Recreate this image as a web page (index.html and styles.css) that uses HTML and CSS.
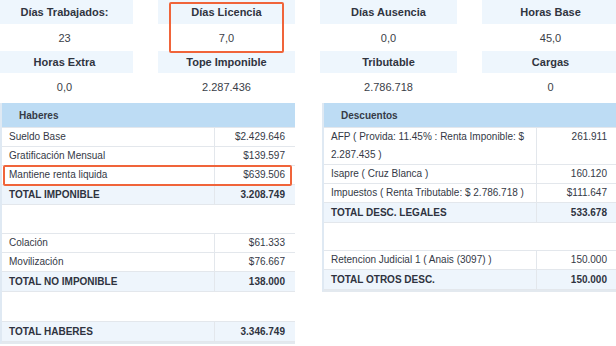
FILE: index.html
```html
<!DOCTYPE html>
<html>
<head>
<meta charset="utf-8">
<link rel="stylesheet" href="styles.css">
</head>
<body>
<div class="page">
  <div class="stats">
    <div class="sh">Días Trabajados:</div>
    <div class="sh">Días Licencia</div>
    <div class="sh">Días Ausencia</div>
    <div class="sh">Horas Base</div>
    <div class="sv">23</div>
    <div class="sv">7,0</div>
    <div class="sv">0,0</div>
    <div class="sv">45,0</div>
    <div class="sh">Horas Extra</div>
    <div class="sh">Tope Imponible</div>
    <div class="sh">Tributable</div>
    <div class="sh">Cargas</div>
    <div class="sv">0,0</div>
    <div class="sv">2.287.436</div>
    <div class="sv">2.786.718</div>
    <div class="sv">0</div>
    <div class="mark mark-licencia"></div>
  </div>

  <div class="panels">
    <div class="panel">
      <table class="tbl">
        <colgroup><col class="cl"><col class="cv"></colgroup>
        <tr class="head"><th colspan="2">Haberes</th></tr>
        <tr><td class="lbl">Sueldo Base</td><td class="val">$2.429.646</td></tr>
        <tr><td class="lbl">Gratificación Mensual</td><td class="val">$139.597</td></tr>
        <tr><td class="lbl">Mantiene renta liquida</td><td class="val">$639.506</td></tr>
        <tr class="total"><td class="lbl">TOTAL IMPONIBLE</td><td class="val">3.208.749</td></tr>
        <tr class="empty e1"><td colspan="2"></td></tr>
        <tr><td class="lbl">Colación</td><td class="val">$61.333</td></tr>
        <tr><td class="lbl">Movilización</td><td class="val">$76.667</td></tr>
        <tr class="total"><td class="lbl">TOTAL NO IMPONIBLE</td><td class="val">138.000</td></tr>
        <tr class="empty e2"><td colspan="2"></td></tr>
        <tr class="total"><td class="lbl">TOTAL HABERES</td><td class="val">3.346.749</td></tr>
      </table>
      <div class="mark mark-renta"></div>
    </div>

    <div class="panel">
      <table class="tbl">
        <colgroup><col class="cl"><col class="cv"></colgroup>
        <tr class="head"><th colspan="2">Descuentos</th></tr>
        <tr><td class="lbl">AFP ( Provida: 11.45% : Renta Imponible: $ 2.287.435 )</td><td class="val top">261.911</td></tr>
        <tr><td class="lbl">Isapre ( Cruz Blanca )</td><td class="val">160.120</td></tr>
        <tr><td class="lbl">Impuestos ( Renta Tributable: $ 2.786.718 )</td><td class="val">$111.647</td></tr>
        <tr class="total"><td class="lbl">TOTAL DESC. LEGALES</td><td class="val">533.678</td></tr>
        <tr class="empty e3"><td colspan="2"></td></tr>
        <tr><td class="lbl">Retencion Judicial 1 ( Anais (3097) )</td><td class="val">150.000</td></tr>
        <tr class="total"><td class="lbl">TOTAL OTROS DESC.</td><td class="val">150.000</td></tr>
      </table>
    </div>
  </div>
</div>
</body>
</html>
```

FILE: styles.css
```css
html, body {
  margin: 0;
  padding: 0;
  background: #ffffff;
  overflow: hidden;
}
body {
  width: 616px;
  height: 346px;
  font-family: "Liberation Sans", Arial, sans-serif;
  color: #343946;
}
.page {
  width: 640px;
}
.stats {
  position: relative;
  margin-left: -4px;
  display: grid;
  grid-template-columns: repeat(4, 137px);
  grid-template-rows: 24px 27px 22px 27px;
  column-gap: 25px;
}
.sh {
  background: #eef6fd;
  font-size: 11px;
  font-weight: bold;
  display: flex;
  align-items: center;
  justify-content: center;
  color: #30343f;
}
.sv {
  font-size: 11px;
  display: flex;
  align-items: center;
  justify-content: center;
  color: #3a3e48;
}
.mark {
  position: absolute;
  border: 2.5px solid #f0643a;
  border-radius: 2px;
  box-sizing: border-box;
  pointer-events: none;
}
.mark-licencia {
  left: 173px;
  top: 2px;
  width: 115px;
  height: 51px;
}
.panels {
  margin-top: 3px;
  display: flex;
  column-gap: 27px;
  align-items: flex-start;
}
.panel {
  position: relative;
  width: 295px;
  flex: none;
  border-left: 2px solid #dfe9f3;
  border-bottom: 2px solid #e3e9ef;
  box-sizing: border-box;
}
.tbl {
  width: 100%;
  border-collapse: collapse;
  font-size: 10px;
  table-layout: fixed;
}
.tbl .cv { width: 81px; }
.tbl td {
  border: 1px solid #e3e7ec;
  padding: 0 10px 0 7px;
  line-height: 18px;
  height: 18px;
}
.tbl tr td:first-child { border-left: none; }
.tbl tr td:last-child { border-right: none; }
.tbl .val {
  text-align: right;
}
.tbl .top { vertical-align: top; }
.head th {
  background: #bddcf4;
  text-align: left;
  font-weight: bold;
  height: 24px;
  padding: 0 0 0 17px;
  color: #353a47;
}
.total td {
  background: #eef5fc;
  font-weight: bold;
  height: 19px;
  color: #2e3340;
}
.empty td { background: #ffffff; }
.e1 td { height: 28px; }
.e2 td { height: 29px; }
.e3 td { height: 27px; }
.mark-renta {
  left: 1px;
  top: 62px;
  width: 289px;
  height: 21px;
}
```
